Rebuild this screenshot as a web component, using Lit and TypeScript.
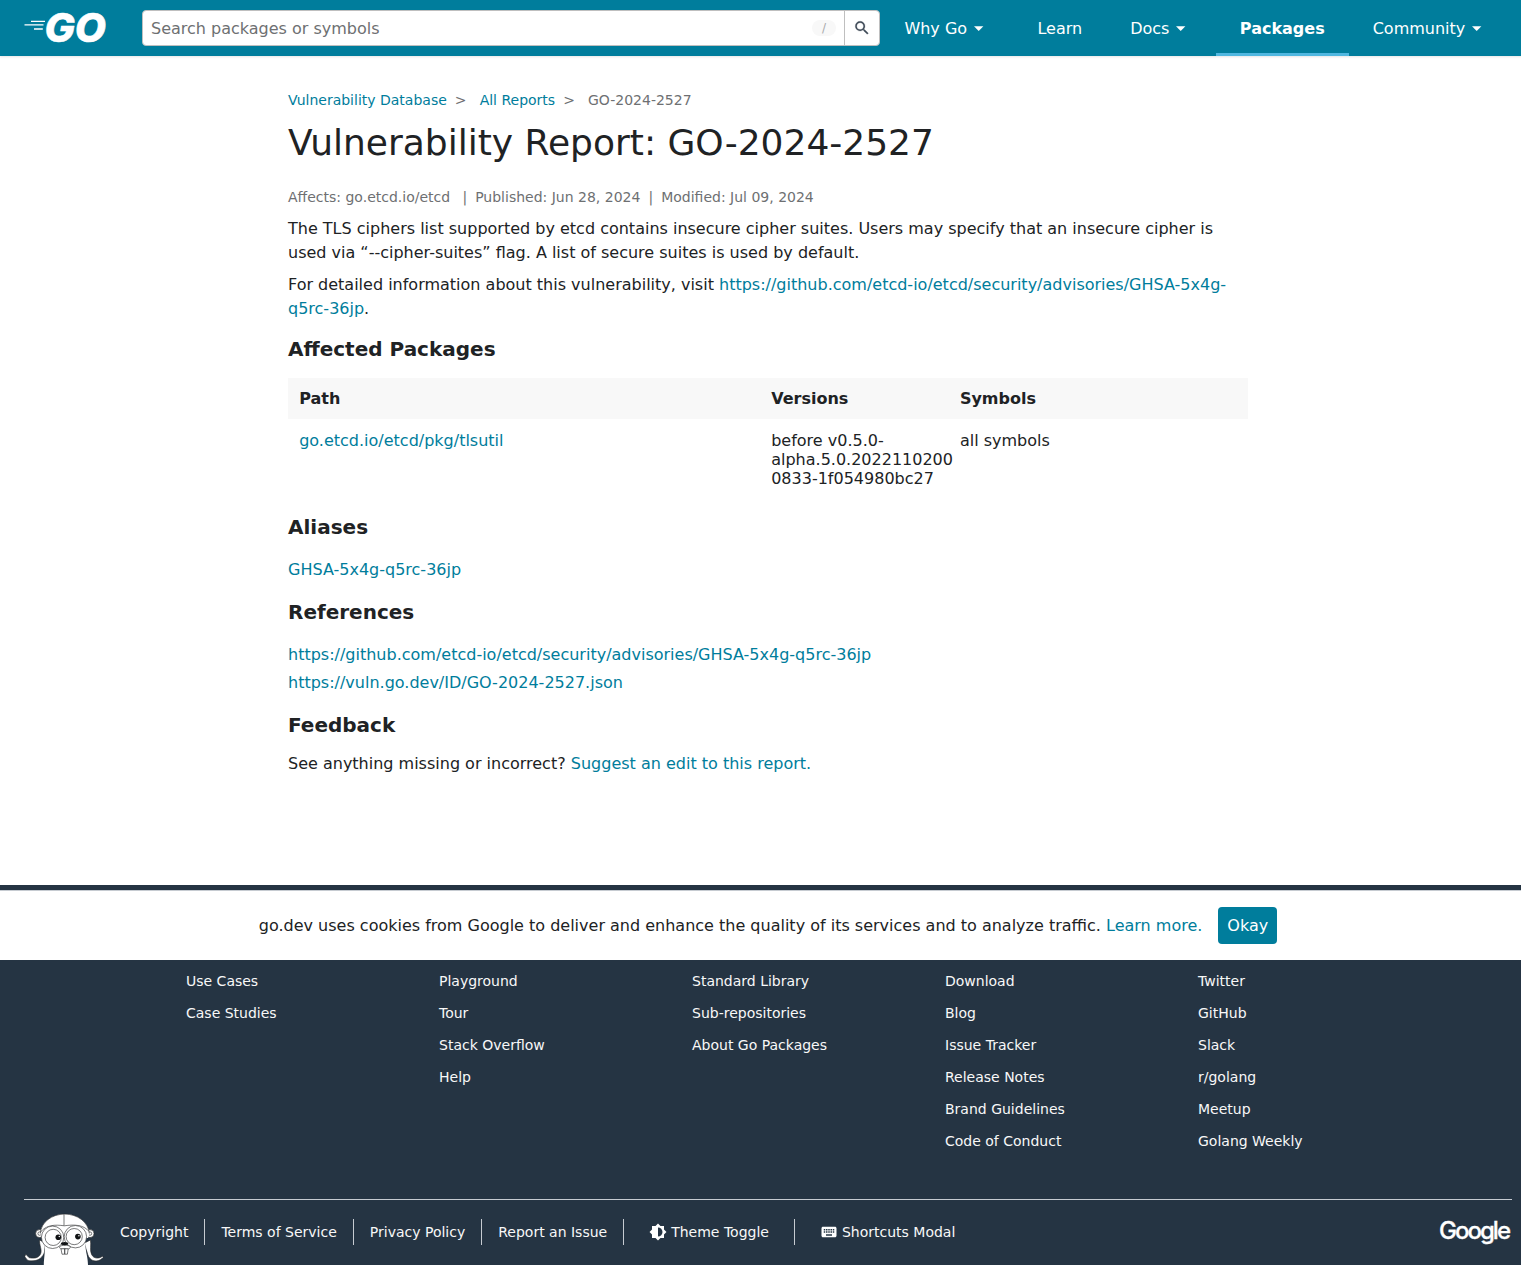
import { LitElement, html, svg, css } from "lit";
import { customElement } from "lit/decorators.js";

const ADVISORY = "https://github.com/etcd-io/etcd/security/advisories/GHSA-5x4g-q5rc-36jp";

const NAV = [
  { label: "Why Go", menu: true },
  { label: "Learn" },
  { label: "Docs", menu: true },
  { label: "Packages", active: true },
  { label: "Community", menu: true },
];

const FOOTER_COLUMNS = [
  ["Use Cases", "Case Studies"],
  ["Playground", "Tour", "Stack Overflow", "Help"],
  ["Standard Library", "Sub-repositories", "About Go Packages"],
  ["Download", "Blog", "Issue Tracker", "Release Notes", "Brand Guidelines", "Code of Conduct"],
  ["Twitter", "GitHub", "Slack", "r/golang", "Meetup", "Golang Weekly"],
];

const caret = svg`<svg class="caret" width="22.4" height="24" viewBox="0 0 22.4 24"><path d="M7 10.2h9.4L11.7 15z" fill="currentColor"/></svg>`;

@customElement("go-header")
class GoHeader extends LitElement {
  static styles = css`
    :host {
      display: flex;
      align-items: center;
      height: 56px;
      padding-left: 24px;
      background: #007d9c;
      box-shadow: 0 1px 2px rgba(171, 171, 171, 0.3);
      color: #fff;
      font-size: 16px;
    }
    .logo { display: block; flex: none; overflow: visible; }
    .wordmark {
      font-family: Inter, sans-serif;
      font-weight: 800;
      font-style: italic;
      font-size: 39px;
    }
    .search {
      display: flex;
      box-sizing: border-box;
      width: 738px;
      height: 36px;
      margin-left: 36px;
      border: 1px solid #bfbfbf;
      border-radius: 4px;
      background: #fff;
    }
    .field {
      display: flex;
      flex: 1;
      align-items: center;
      justify-content: space-between;
      padding: 0 8px;
      color: #6e7072;
    }
    .key {
      width: 24px;
      height: 16px;
      border-radius: 8px;
      background: #f8f8f8;
      color: #a8aaac;
      font-size: 12px;
      line-height: 16px;
      text-align: center;
    }
    .submit {
      display: flex;
      align-items: center;
      justify-content: center;
      width: 34px;
      border-left: 1px solid #bfbfbf;
    }
    nav { display: flex; height: 56px; padding-left: 0.4px; }
    .item {
      display: flex;
      box-sizing: border-box;
      align-items: center;
      padding: 3px 24px 0;
      border-bottom: 3px solid transparent;
      white-space: nowrap;
    }
    .active { border-bottom-color: #50b7e0; font-weight: bold; }
  `;
  render() {
    return html`
      <svg class="logo" width="82" height="36" viewBox="0 0 82 36" role="img" aria-label="Go">
        <path d="M7 11.3h14M0.5 14.9h19M10 19h8.8" stroke="#fff" stroke-width="1.3" />
        <text class="wordmark" x="20.5" y="32.2" textLength="61.5" lengthAdjust="spacingAndGlyphs" fill="#fff" stroke="#fff" stroke-width=".6">GO</text>
      </svg>
      <div class="search">
        <div class="field"><span>Search packages or symbols</span><span class="key">/</span></div>
        <div class="submit">
          <svg width="18" height="18" viewBox="0 0 24 24"><path fill="#3e4a57" stroke="#3e4a57" stroke-width=".3" d="M15.5 14h-.79l-.28-.27A6.47 6.47 0 0 0 16 9.5 6.5 6.5 0 1 0 9.5 16c1.61 0 3.09-.59 4.23-1.57l.27.28v.79l5 4.99L20.49 19l-4.99-5zm-6 0C7.01 14 5 11.99 5 9.5S7.01 5 9.5 5 14 7.01 14 9.5 11.99 14 9.5 14z"/></svg>
        </div>
      </div>
      <nav>
        ${NAV.map((n) => html`<div class="item ${n.active ? "active" : ""}">${n.label}${n.menu ? caret : ""}</div>`)}
      </nav>
    `;
  }
}

@customElement("vuln-report")
class VulnReport extends LitElement {
  static styles = css`
    :host {
      display: block;
      box-sizing: border-box;
      width: 960px;
      height: 829px;
      margin: 0 auto;
      padding-top: 33px;
      font-size: 16px;
      line-height: 24px;
    }
    a { color: #007d9c; text-decoration: none; }
    .crumbs { display: flex; height: 22px; line-height: 22px; font-size: 14px; color: #6e7072; }
    .sep { padding: 0 13.1px 0 8px; }
    h1 { margin: 10px 0 0; font-size: 36px; font-weight: normal; line-height: 44px; }
    .meta { display: flex; margin-top: 21px; height: 22px; line-height: 22px; font-size: 14px; color: #6e7072; }
    .bar { width: 20.8px; text-align: center; }
    .bar.wide { width: 25px; padding-left: 4.5px; box-sizing: border-box; }
    p { margin: 8px 0 0; }
    .summary { margin-top: 9px; }
    h2 { margin: 0; font-size: 20px; line-height: 24px; }
    .h-affected { margin-top: 16px; }
    .table { margin-top: 17px; line-height: 19px; }
    .row {
      display: grid;
      grid-template-columns: 472px 188.7px 1fr;
      padding: 12px 11.2px 10px;
    }
    .head { padding: 11px 11.2px; background: #f8f8f8; font-weight: bold; }
    .version { width: 185px; overflow-wrap: anywhere; }
    .h-aliases { margin-top: 17px; }
    .links { display: flex; flex-direction: column; gap: 4px; margin-top: 19px; }
    .h-next { margin-top: 18px; }
    .feedback { margin-top: 15px; }
  `;
  render() {
    return html`
      <div class="crumbs">
        <a>Vulnerability Database</a><span class="sep">&gt;</span><a>All Reports</a><span class="sep">&gt;</span><span>GO-2024-2527</span>
      </div>
      <h1>Vulnerability Report: GO-2024-2527</h1>
      <div class="meta">
        <span>Affects: go.etcd.io/etcd</span><span class="bar wide">|</span><span>Published: Jun 28, 2024</span><span class="bar">|</span><span>Modified: Jul 09, 2024</span>
      </div>
      <p class="summary">The TLS ciphers list supported by etcd contains insecure cipher suites. Users may specify that an insecure cipher is used via “--cipher-suites” flag. A list of secure suites is used by default.</p>
      <p>For detailed information about this vulnerability, visit <a>${ADVISORY}</a>.</p>
      <h2 class="h-affected">Affected Packages</h2>
      <div class="table">
        <div class="row head"><span>Path</span><span>Versions</span><span>Symbols</span></div>
        <div class="row"><a>go.etcd.io/etcd/pkg/tlsutil</a><span class="version">before v0.5.0-alpha.5.0.20221102000833-1f054980bc27</span><span>all symbols</span></div>
      </div>
      <h2 class="h-aliases">Aliases</h2>
      <div class="links"><a>GHSA-5x4g-q5rc-36jp</a></div>
      <h2 class="h-next">References</h2>
      <div class="links"><a>${ADVISORY}</a><a>https://vuln.go.dev/ID/GO-2024-2527.json</a></div>
      <h2 class="h-next">Feedback</h2>
      <p class="feedback">See anything missing or incorrect? <a>Suggest an edit to this report.</a></p>
    `;
  }
}

@customElement("cookie-notice")
class CookieNotice extends LitElement {
  static styles = css`
    :host {
      display: flex;
      box-sizing: border-box;
      height: 70px;
      align-items: center;
      justify-content: center;
      gap: 16px;
      border-top: 1px solid #c6cbd1;
      background: #fff;
      font-size: 16px;
      color: #202224;
    }
    a { color: #007d9c; }
    .okay {
      padding: 0 9px;
      border-radius: 4px;
      background: #007d9c;
      color: #fff;
      line-height: 37px;
    }
  `;
  render() {
    return html`<span>go.dev uses cookies from Google to deliver and enhance the quality of its services and to analyze traffic. <a>Learn more.</a></span><span class="okay">Okay</span>`;
  }
}

@customElement("go-footer")
class GoFooter extends LitElement {
  static styles = css`
    :host {
      display: block;
      padding-top: 5px;
      background: #253443;
      color: #f8f8f8;
      font-size: 14px;
    }
    .columns {
      display: grid;
      grid-template-columns: repeat(5, 253px);
      box-sizing: border-box;
      height: 239px;
      padding: 5px 0 0 186px;
      line-height: 32px;
    }
    .bottom {
      display: flex;
      height: 66px;
      margin: 0 24px;
      border-top: 1px solid #c6cbd1;
    }
    .gopher { flex: none; margin-top: 13px; }
    .legal { display: flex; margin-top: 19px; height: 26px; line-height: 26px; }
    .legal span {
      display: flex;
      align-items: center;
      gap: 4px;
      padding: 0 16px;
      border-right: 1px solid #c6cbd1;
    }
    .legal .tool { padding: 0 25px; }
    .legal .last { border-right: 0; }
    .google {
      overflow: visible;
      margin: 18px 0 0 auto;
      font-family: Inter, sans-serif;
      font-weight: 500;
      font-size: 24px;
    }
  `;
  gopher() {
    return svg`<svg class="gopher" width="80" height="52" viewBox="0 0 80 52">
      <g fill="#fff" stroke="#202224" stroke-width=".6" stroke-linejoin="round">
        <path d="M15.6 27C15 32 18.5 37 16.5 41C14.5 45.5 9 45.6 5 44.6L1.8 41.2L.8 43.4C3 47.8 5 48 9 47.8C15 47.6 19 44 20.5 39L21.5 30Z"/>
        <path d="M66.4 27C67.4 32 65.6 37 67.6 41.5C69.5 45.4 74 46.3 78.6 43.2L79.3 44.3C76 48.5 69.5 49.4 66 45.5C63.5 43 63.6 40 62 36L60.5 30Z"/>
        <path stroke="none" d="M19.8 53C19.8 46 20.8 42 21 34L21 24H61L61.5 34C62 40 64 45 64 53Z"/>
        <circle cx="15.6" cy="20.6" r="4"/><circle cx="66" cy="20.6" r="4"/>
        <circle cx="15.6" cy="20.6" r="1.7"/><circle cx="66" cy="20.6" r="1.7"/>
        <path stroke="none" d="M16.3 20.5C17 9 28 1.1 40.7 1.1S64.5 9 65.3 20.5L64 25H18Z"/>
        <path fill="none" d="M16.3 20.5C17 9 28 1.1 40.7 1.1S64.5 9 65.3 20.5M40 1.3V12.6M16.6 19C22 12 31 11.4 40.3 12.8C50 11.4 59.5 11.6 65 18.4"/>
        <circle cx="28.6" cy="24.3" r="11.2"/><circle cx="51.4" cy="23.7" r="11.2"/>
        <circle cx="29.2" cy="24.4" r="8.1"/><circle cx="50.2" cy="23.6" r="8.1"/>
        <path d="M35.6 33.8C36.4 31.8 45.6 31.8 46.2 33.8C46.6 36.2 43.4 36.4 40.9 35.4C38.4 36.4 35.2 36.2 35.6 33.8Z"/>
        <path d="M37 35.8H40.6V41.2H38ZM40.8 35.8H44.2L43.4 41.2H40.8Z"/>
      </g>
      <ellipse cx="40.6" cy="30.6" rx="3.7" ry="1.7" fill="#101214"/>
      <circle cx="34.3" cy="24.3" r="2.8" fill="#101214"/><circle cx="53.9" cy="23.6" r="2.8" fill="#101214"/>
      <circle cx="35.3" cy="23.5" r=".7" fill="#fff"/><circle cx="54.9" cy="22.8" r=".7" fill="#fff"/>
    </svg>`;
  }
  render() {
    return html`
      <cookie-notice></cookie-notice>
      <div class="columns">
        ${FOOTER_COLUMNS.map((c) => html`<div>${c.map((l) => html`<div>${l}</div>`)}</div>`)}
      </div>
      <div class="bottom">
        ${this.gopher()}
        <div class="legal">
          <span>Copyright</span><span>Terms of Service</span><span>Privacy Policy</span><span>Report an Issue</span>
          <span class="tool">
            <svg width="18" height="18" viewBox="0 0 24 24"><path fill="#fff" d="M20 8.69V4h-4.69L12 .69 8.69 4H4v4.69L.69 12 4 15.31V20h4.69L12 23.31 15.31 20H20v-4.69L23.31 12 20 8.69zM12 18V6c3.31 0 6 2.69 6 6s-2.69 6-6 6z"/></svg>Theme Toggle</span>
          <span class="tool last">
            <svg width="18" height="18" viewBox="0 0 24 24"><path fill="#fff" d="M20 5H4c-1.1 0-1.99.9-1.99 2L2 17c0 1.1.9 2 2 2h16c1.1 0 2-.9 2-2V7c0-1.1-.9-2-2-2zm-9 3h2v2h-2V8zm0 3h2v2h-2v-2zM8 8h2v2H8V8zm0 3h2v2H8v-2zm-1 2H5v-2h2v2zm0-3H5V8h2v2zm9 7H8v-2h8v2zm0-4h-2v-2h2v2zm0-3h-2V8h2v2zm3 3h-2v-2h2v2zm0-3h-2V8h2v2z"/></svg>Shortcuts Modal</span>
        </div>
        <svg class="google" width="73" height="30" viewBox="0 0 73 30"><text x="0" y="20.6" textLength="72" lengthAdjust="spacing" fill="#fff" stroke="#fff" stroke-width=".3">Google</text></svg>
      </div>
    `;
  }
}

@customElement("app-root")
class AppRoot extends LitElement {
  static styles = css`
    :host {
      display: block;
      height: 1265px;
      overflow: hidden;
      background: #fff;
      color: #202224;
      font-family: "DejaVu Sans", sans-serif;
    }
    .page { width: 1536px; }
  `;
  render() {
    return html`<div class="page">
      <go-header></go-header>
      <vuln-report></vuln-report>
      <go-footer></go-footer>
    </div>`;
  }
}
